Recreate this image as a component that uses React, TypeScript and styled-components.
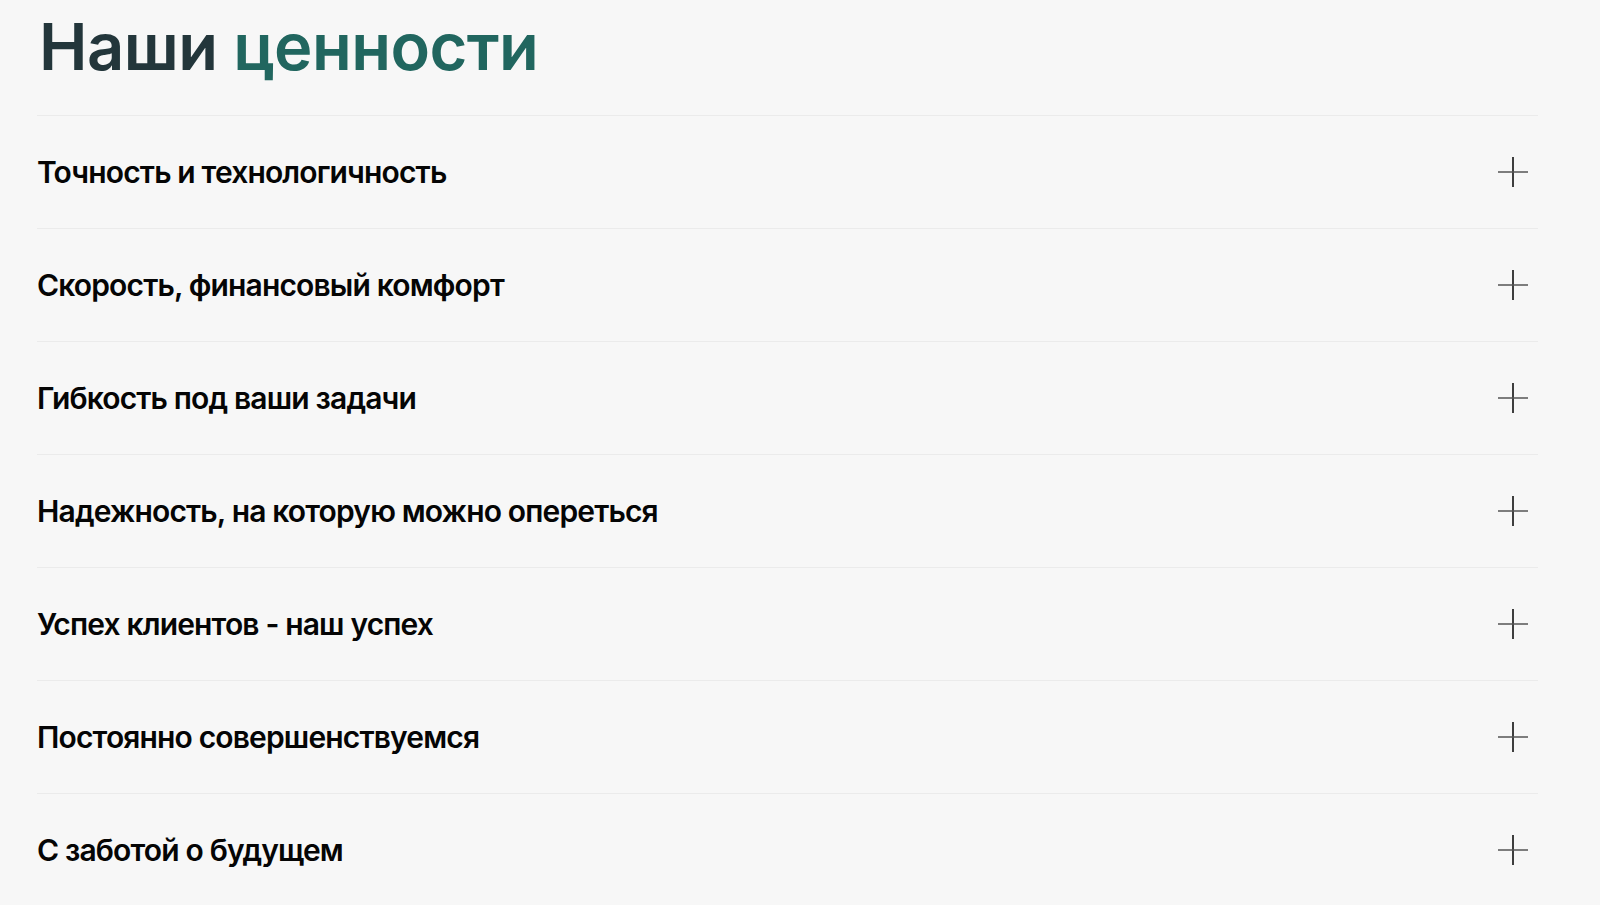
import React from 'react';
import styled, { createGlobalStyle } from 'styled-components';

const GlobalStyle = createGlobalStyle`
  html, body {
    margin: 0;
    padding: 0;
    background: #f7f7f7;
  }
  body {
    font-family: Inter, "Noto Sans", sans-serif;
    -webkit-font-smoothing: antialiased;
  }
`;

const Section = styled.section`
  padding: 0 62px 0 37px;
  background: #f7f7f7;
`;

const Title = styled.h2`
  margin: 0;
  padding: 8px 0 0 2px;
  height: 115px;
  box-sizing: border-box;
  font-size: 65px;
  line-height: 78px;
  font-weight: 600;
  letter-spacing: -0.55px;
  color: #23363b;
`;

const Accent = styled.span`
  color: #21665f;
`;

const List = styled.ul`
  list-style: none;
  margin: 0;
  padding: 0;
`;

const Item = styled.li`
  display: flex;
  align-items: center;
  justify-content: space-between;
  height: 113px;
  border-top: 1px solid #ebebeb;
  box-sizing: border-box;
  cursor: pointer;
`;

const Label = styled.span`
  font-size: 30px;
  font-weight: 600;
  letter-spacing: -0.85px;
  color: #050505;
`;

const PlusIcon = styled.svg`
  width: 30px;
  height: 30px;
  margin-right: 10px;
  flex-shrink: 0;
`;

const values = [
  'Точность и технологичность',
  'Скорость, финансовый комфорт',
  'Гибкость под ваши задачи',
  'Надежность, на которую можно опереться',
  'Успех клиентов - наш успех',
  'Постоянно совершенствуемся',
  'С заботой о будущем',
];

const Plus = () => (
  <PlusIcon viewBox="0 0 30 30" fill="none">
    <path d="M15 0v30" stroke="#000" strokeWidth="1.5" />
    <path d="M0 15h30" stroke="#555" strokeWidth="1.5" />
  </PlusIcon>
);

const App = () => {
  return (
    <>
      <GlobalStyle />
      <Section>
        <Title>
          Наши <Accent>ценности</Accent>
        </Title>
        <List>
          {values.map((v) => (
            <Item key={v}>
              <Label>{v}</Label>
              <Plus />
            </Item>
          ))}
        </List>
      </Section>
    </>
  );
};

export default App;
